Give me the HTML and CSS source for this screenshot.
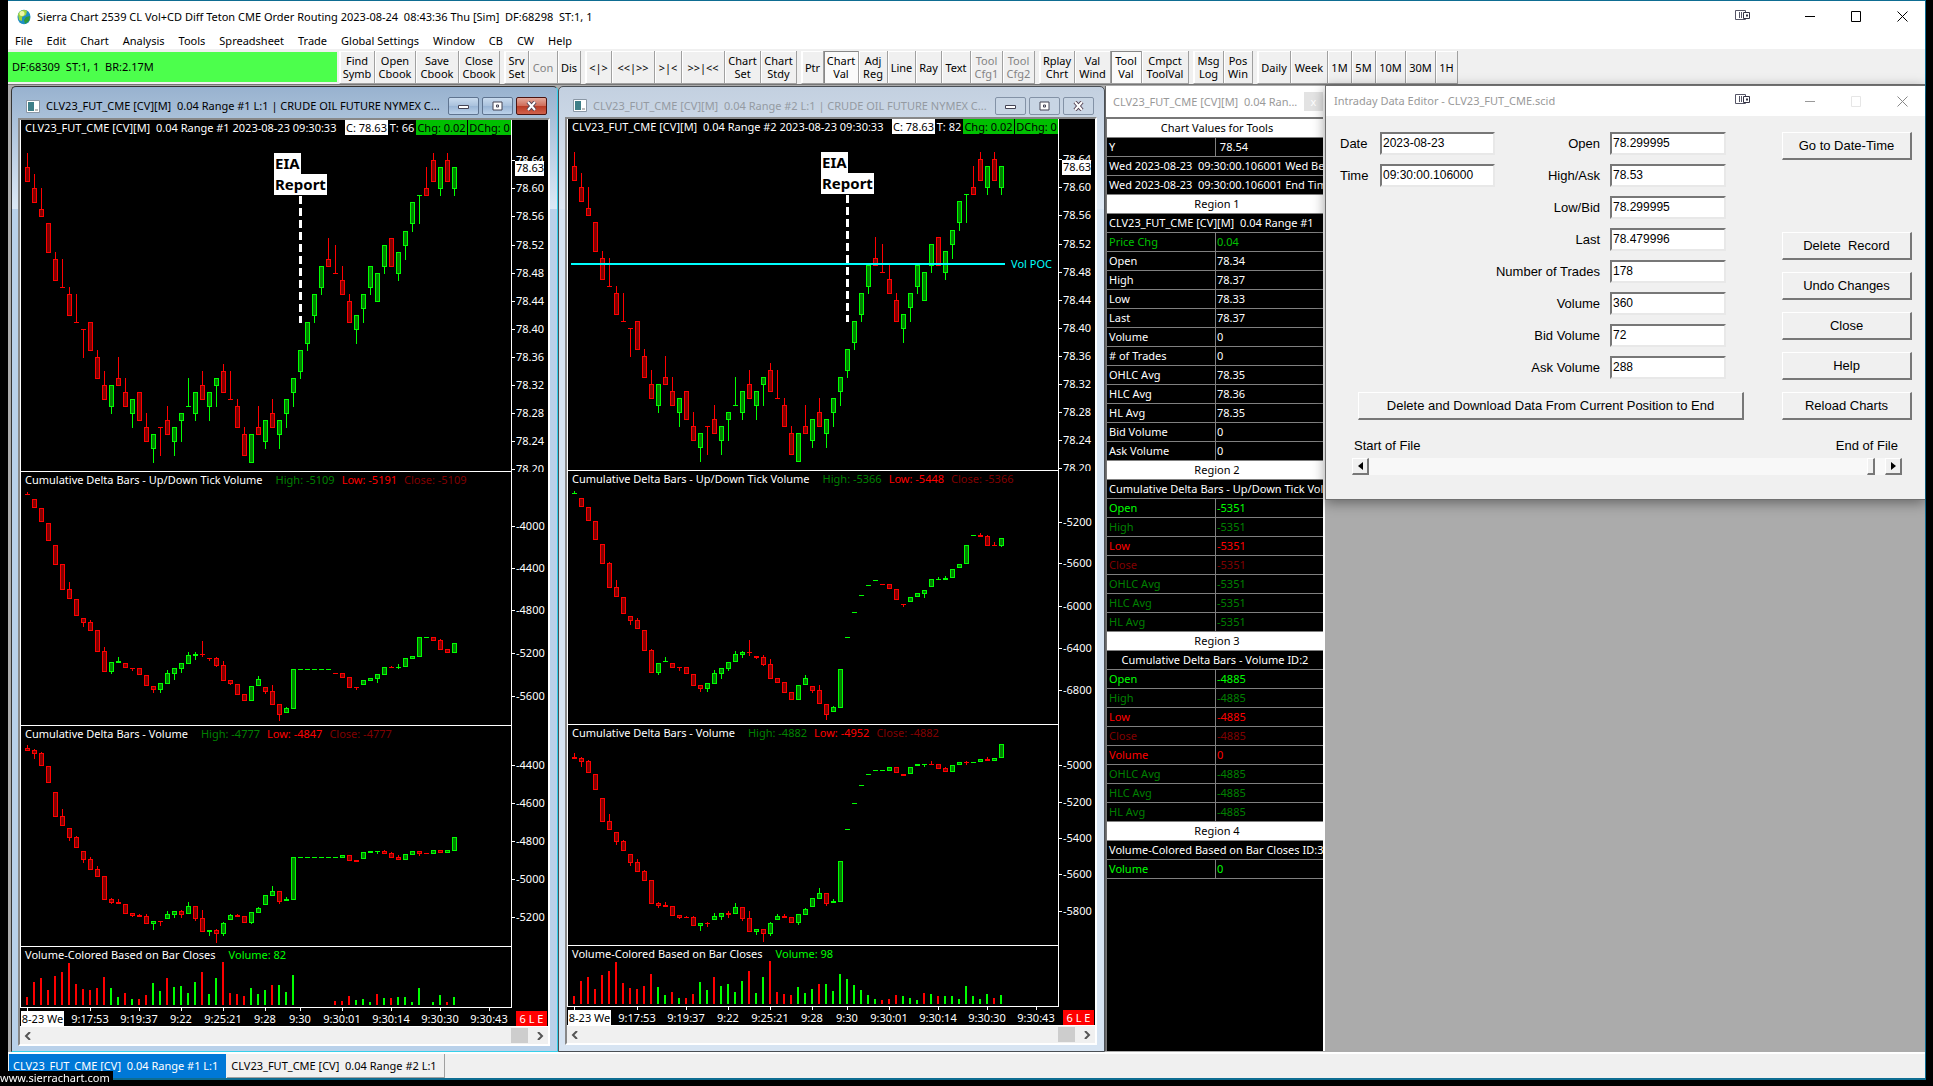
FILE: index.html
```html
<!DOCTYPE html>
<html lang="en">
<head>
<meta charset="utf-8">
<title>Sierra Chart</title>
<link rel="stylesheet" href="styles.css">
</head>
<body>
<div class="app">
  <header class="titlebar">
    <svg class="globe" width="14" height="16" viewBox="0 0 14 16"><ellipse cx="7" cy="8" rx="6.5" ry="7.3" fill="#1f8fc4"/><path d="M1 5C3 1 8 0 10 2L9 6 5 8 5 12 2 11Z" fill="#9fd33c"/><path d="M9 8 13 7 12 12 8 15 7 11Z" fill="#2f9a3c"/><ellipse cx="5" cy="4.500" rx="2.500" ry="2.500" fill="#eef7a8"/></svg>
    <h1 class="app-title">Sierra Chart 2539 CL Vol+CD Diff Teton CME Order Routing 2023-08-24&nbsp; 08:43:36 Thu [Sim]&nbsp; DF:68298&nbsp; ST:1, 1</h1>
    <div class="win-controls">
      <button class="wc" aria-label="Dock"><svg width="16" height="12" viewBox="0 0 16 12"><path d="M.5 1.500h10v9H.500zM4.500 3v6M6.500 3v6" fill="none" stroke="#556"/><path d="M8.500 3.500h6v6h-6z" fill="#fff" stroke="#334"/><path d="M11 5.500h2v2h-2z" fill="#334"/></svg></button>
      <button class="wc" aria-label="Minimize"><svg width="11" height="11"><path d="M0 5.500h10" stroke="#000"/></svg></button>
      <button class="wc" aria-label="Maximize"><svg width="11" height="11"><path d="M.5.5h9v10h-9z" fill="none" stroke="#000"/></svg></button>
      <button class="wc" aria-label="Close"><svg width="11" height="11"><path d="M.5.5l10 10M10.500.5l-10 10" stroke="#000"/></svg></button>
    </div>
  </header>
  <nav class="menu">
    <button>File</button><button>Edit</button><button>Chart</button><button>Analysis</button><button>Tools</button><button>Spreadsheet</button><button>Trade</button><button>Global Settings</button><button>Window</button><button>CB</button><button>CW</button><button>Help</button>
  </nav>
  <div class="toolbar">
    <div class="status">DF:68309&nbsp; ST:1, 1&nbsp; BR:2.17M</div>
    <div class="group"><button class="w35">Find<br>Symb</button><button class="w41">Open<br>Cbook</button><button class="w43">Save<br>Cbook</button><button class="w41">Close<br>Cbook</button></div>
    <div class="group"><button class="w24">Srv<br>Set</button><button class="w29" disabled>Con</button><button class="w23">Dis</button></div>
    <div class="group"><button class="w26">&lt;|&gt;</button><button class="w43">&lt;&lt;|&gt;&gt;</button><button class="w27">&gt;|&lt;</button><button class="w43">&gt;&gt;|&lt;&lt;</button><button class="w36">Chart<br>Set</button><button class="w36">Chart<br>Stdy</button></div>
    <div class="group"><button class="w22">Ptr</button><button class="w35 on">Chart<br>Val</button><button class="w29">Adj<br>Reg</button><button class="w28">Line</button><button class="w26">Ray</button><button class="w29">Text</button><button class="w32" disabled>Tool<br>Cfg1</button><button class="w32" disabled>Tool<br>Cfg2</button></div>
    <div class="group"><button class="w35">Rplay<br>Chrt</button><button class="w36">Val<br>Wind</button><button class="w31 on">Tool<br>Val</button><button class="w47">Cmpct<br>ToolVal</button></div>
    <div class="group"><button class="w30">Msg<br>Log</button><button class="w29">Pos<br>Win</button></div>
    <div class="group"><button class="w33">Daily</button><button class="w37">Week</button><button class="w24">1M</button><button class="w24">5M</button><button class="w30">10M</button><button class="w30">30M</button><button class="w22">1H</button></div>
  </div>

  <main class="mdi">
    <section class="child active" data-chart="1">
      <div class="caption">
        <svg class="doc" width="14" height="13"><path d="M.5.5h13v12H.500z" fill="#fff" stroke="#8a97a5"/><path d="M2 2h6v9H2z" fill="#3f7f88"/><path d="M9 9h3v2H9z" fill="#bbb"/></svg>
        <span class="caption-text">CLV23_FUT_CME [CV][M]&nbsp; 0.04 Range #1 L:1 | CRUDE OIL FUTURE NYMEX C...</span>
        <button aria-label="Minimize"><svg width="13" height="10"><path d="M1.500 4.500h10v3h-10z" fill="#fff" stroke="#445"/></svg></button>
        <button aria-label="Restore"><svg width="13" height="10"><path d="M2 1h9v8H2z" fill="#fff" stroke="#445"/><path d="M5.500 4h2v2h-2z" fill="none" stroke="#445"/></svg></button>
        <button class="close" aria-label="Close"><svg width="13" height="10"><path d="M3 1l7 8M10 1l-7 8" stroke="#545" stroke-width="4"/><path d="M3 1l7 8M10 1l-7 8" stroke="#fff" stroke-width="2"/></svg></button>
      </div>
      <div class="client">
        <div class="panel price"><p class="head"><span class="symbol">CLV23_FUT_CME [CV][M]&nbsp; 0.04 Range #1 2023-08-23 09:30:33</span><b class="last">C: 78.63</b><span class="trades">T: 66</span><b class="chg">Chg: 0.02</b><b class="chg">DChg: 0</b></p><svg class="plot"></svg><p class="note"><b>EIA</b><br><b>Report</b></p></div>
        <div class="panel ud"><p class="head">Cumulative Delta Bars - Up/Down Tick Volume<i class="hi">High: -5109</i><i class="lo">Low: -5191</i><i class="cl">Close: -5109</i></p><svg class="plot"></svg></div>
        <div class="panel cd"><p class="head">Cumulative Delta Bars - Volume<i class="hi">High: -4777</i><i class="lo">Low: -4847</i><i class="cl">Close: -4777</i></p><svg class="plot"></svg></div>
        <div class="panel vol"><p class="head">Volume-Colored Based on Bar Closes<i class="up">Volume: 82</i></p><svg class="plot"></svg></div>
        <div class="times"><svg class="plot"></svg><b class="date">8-23 We</b><b class="flag">6 L E</b></div>
        <div class="hscroll"><button aria-label="Scroll left"><svg width="8" height="8"><path d="M6 0L2 4l4 4" fill="none" stroke="#555" stroke-width="2"/></svg></button><span class="thumb"></span><button aria-label="Scroll right"><svg width="8" height="8"><path d="M2 0l4 4-4 4" fill="none" stroke="#555" stroke-width="2"/></svg></button></div>
      </div>
    </section>

    <section class="child" data-chart="2">
      <div class="caption">
        <svg class="doc" width="14" height="13"><path d="M.5.5h13v12H.500z" fill="#fff" stroke="#8a97a5"/><path d="M2 2h6v9H2z" fill="#3f7f88"/><path d="M9 9h3v2H9z" fill="#bbb"/></svg>
        <span class="caption-text">CLV23_FUT_CME [CV][M]&nbsp; 0.04 Range #2 L:1 | CRUDE OIL FUTURE NYMEX C...</span>
        <button aria-label="Minimize"><svg width="13" height="10"><path d="M1.500 4.500h10v3h-10z" fill="#fff" stroke="#445"/></svg></button>
        <button aria-label="Restore"><svg width="13" height="10"><path d="M2 1h9v8H2z" fill="#fff" stroke="#445"/><path d="M5.500 4h2v2h-2z" fill="none" stroke="#445"/></svg></button>
        <button aria-label="Close"><svg width="13" height="10"><path d="M3 1l7 8M10 1l-7 8" stroke="#545" stroke-width="4"/><path d="M3 1l7 8M10 1l-7 8" stroke="#fff" stroke-width="2"/></svg></button>
      </div>
      <div class="client">
        <div class="panel price"><p class="head"><span class="symbol">CLV23_FUT_CME [CV][M]&nbsp; 0.04 Range #2 2023-08-23 09:30:33</span><b class="last">C: 78.63</b><span class="trades">T: 82</span><b class="chg">Chg: 0.02</b><b class="chg">DChg: 0</b></p><svg class="plot"></svg><p class="note"><b>EIA</b><br><b>Report</b></p></div>
        <div class="panel ud"><p class="head">Cumulative Delta Bars - Up/Down Tick Volume<i class="hi">High: -5366</i><i class="lo">Low: -5448</i><i class="cl">Close: -5366</i></p><svg class="plot"></svg></div>
        <div class="panel cd"><p class="head">Cumulative Delta Bars - Volume<i class="hi">High: -4882</i><i class="lo">Low: -4952</i><i class="cl">Close: -4882</i></p><svg class="plot"></svg></div>
        <div class="panel vol"><p class="head">Volume-Colored Based on Bar Closes<i class="up">Volume: 98</i></p><svg class="plot"></svg></div>
        <div class="times"><svg class="plot"></svg><b class="date">8-23 We</b><b class="flag">6 L E</b></div>
        <div class="hscroll"><button aria-label="Scroll left"><svg width="8" height="8"><path d="M6 0L2 4l4 4" fill="none" stroke="#555" stroke-width="2"/></svg></button><span class="thumb"></span><button aria-label="Scroll right"><svg width="8" height="8"><path d="M2 0l4 4-4 4" fill="none" stroke="#555" stroke-width="2"/></svg></button></div>
      </div>
    </section>

    <section class="values">
      <div class="values-caption"><span>CLV23_FUT_CME [CV][M]&nbsp; 0.04 Ran...</span><button aria-label="Close">x</button></div>
      <div class="values-body">
      <table>
        <tr class="region"><th colspan="2">Chart Values for Tools</th></tr>
        <tr><td>Y</td><td>&nbsp;78.54</td></tr>
        <tr><td colspan="2">Wed 2023-08-23&nbsp; 09:30:00.106001 Wed Begin</td></tr>
        <tr><td colspan="2">Wed 2023-08-23&nbsp; 09:30:00.106001 End Time</td></tr>
        <tr class="region"><th colspan="2">Region 1</th></tr>
        <tr><td colspan="2">CLV23_FUT_CME [CV][M]&nbsp; 0.04 Range #1</td></tr>
        <tr class="chgrow"><td>Price Chg</td><td>0.04</td></tr>
        <tr><td>Open</td><td>78.34</td></tr>
        <tr><td>High</td><td>78.37</td></tr>
        <tr><td>Low</td><td>78.33</td></tr>
        <tr><td>Last</td><td>78.37</td></tr>
        <tr><td>Volume</td><td>0</td></tr>
        <tr><td># of Trades</td><td>0</td></tr>
        <tr><td>OHLC Avg</td><td>78.35</td></tr>
        <tr><td>HLC Avg</td><td>78.36</td></tr>
        <tr><td>HL Avg</td><td>78.35</td></tr>
        <tr><td>Bid Volume</td><td>0</td></tr>
        <tr><td>Ask Volume</td><td>0</td></tr>
        <tr class="region"><th colspan="2">Region 2</th></tr>
        <tr><td colspan="2">Cumulative Delta Bars - Up/Down Tick Volume</td></tr>
        <tr class="up"><td>Open</td><td>-5351</td></tr>
        <tr class="hi"><td>High</td><td>-5351</td></tr>
        <tr class="lo"><td>Low</td><td>-5351</td></tr>
        <tr class="cl"><td>Close</td><td>-5351</td></tr>
        <tr class="hi"><td>OHLC Avg</td><td>-5351</td></tr>
        <tr class="hi"><td>HLC Avg</td><td>-5351</td></tr>
        <tr class="hi"><td>HL Avg</td><td>-5351</td></tr>
        <tr class="region"><th colspan="2">Region 3</th></tr>
        <tr><td class="mid" colspan="2">Cumulative Delta Bars - Volume ID:2</td></tr>
        <tr class="up"><td>Open</td><td>-4885</td></tr>
        <tr class="hi"><td>High</td><td>-4885</td></tr>
        <tr class="lo"><td>Low</td><td>-4885</td></tr>
        <tr class="cl"><td>Close</td><td>-4885</td></tr>
        <tr class="lo"><td>Volume</td><td>0</td></tr>
        <tr class="hi"><td>OHLC Avg</td><td>-4885</td></tr>
        <tr class="hi"><td>HLC Avg</td><td>-4885</td></tr>
        <tr class="hi"><td>HL Avg</td><td>-4885</td></tr>
        <tr class="region"><th colspan="2">Region 4</th></tr>
        <tr><td colspan="2">Volume-Colored Based on Bar Closes ID:3</td></tr>
        <tr class="up"><td>Volume</td><td>0</td></tr>
      </table>
      </div>
    </section>

    <section class="dialog">
      <div class="dialog-caption"><h2>Intraday Data Editor - CLV23_FUT_CME.scid</h2>
        <div class="win-controls">
          <button class="wc" aria-label="Dock"><svg width="16" height="12" viewBox="0 0 16 12"><path d="M.5 1.500h10v9H.500zM4.500 3v6M6.500 3v6" fill="none" stroke="#556"/><path d="M8.500 3.500h6v6h-6z" fill="#fff" stroke="#334"/><path d="M11 5.500h2v2h-2z" fill="#334"/></svg></button>
          <button class="wc" aria-label="Minimize"><svg width="11" height="11"><path d="M0 5.500h10" stroke="#999"/></svg></button>
          <button class="wc" aria-label="Maximize" disabled><svg width="11" height="11"><path d="M.5.5h9v10h-9z" fill="none" stroke="#e6e6e6"/></svg></button>
          <button class="wc" aria-label="Close"><svg width="11" height="11"><path d="M.5.5l10 10M10.500.5l-10 10" stroke="#888"/></svg></button>
        </div>
      </div>
      <form class="editor">
        <div class="editor-main">
          <div class="fields-area">
            <div class="fields">
              <div class="stamp">
                <label for="f-date">Date</label><input id="f-date" value="2023-08-23">
                <label for="f-time">Time</label><input id="f-time" value="09:30:00.106000">
              </div>
              <div class="record">
                <label for="f-open">Open</label><input id="f-open" value="78.299995">
                <label for="f-high">High/Ask</label><input id="f-high" value="78.53">
                <label for="f-low">Low/Bid</label><input id="f-low" value="78.299995">
                <label for="f-last">Last</label><input id="f-last" value="78.479996">
                <label for="f-num">Number of Trades</label><input id="f-num" value="178">
                <label for="f-vol">Volume</label><input id="f-vol" value="360">
                <label for="f-bid">Bid Volume</label><input id="f-bid" value="72">
                <label for="f-ask">Ask Volume</label><input id="f-ask" value="288">
              </div>
            </div>
            <button type="button" class="btn wide">Delete and Download Data From Current Position to End</button>
          </div>
          <div class="actions">
            <button type="button" class="btn goto">Go to Date-Time</button>
            <button type="button" class="btn">Delete&nbsp; Record</button>
            <button type="button" class="btn">Undo Changes</button>
            <button type="button" class="btn">Close</button>
            <button type="button" class="btn">Help</button>
            <button type="button" class="btn">Reload Charts</button>
          </div>
        </div>
        <div class="ends"><label for="f-pos">Start of File</label><span>End of File</span></div>
        <div class="position">
          <button type="button" aria-label="Back"><svg width="5" height="8"><path d="M5 0v8L0 4z"/></svg></button>
          <input id="f-pos" type="range" min="0" max="100" value="98">
          <button type="button" aria-label="Forward"><svg width="5" height="8"><path d="M0 0v8l5-4z"/></svg></button>
        </div>
      </form>
    </section>
  </main>

  <footer class="tabs">
    <button class="tab current">CLV23_FUT_CME [CV]&nbsp; 0.04 Range #1 L:1</button><button class="tab">CLV23_FUT_CME [CV]&nbsp; 0.04 Range #2 L:1</button>
  </footer>
</div>
<a class="site" href="#">www.sierrachart.com</a>
<script src="charts.js"></script>
</body>
</html>
```
FILE: charts.js
```js
// Each bar: high, body top, body bottom, low, colour. Prices are in ticks below 78.65.
const price = `0,2,4,4,r 3,5,7,7,r 5,8,9,9,r 10,10,14,14,r 14,15,18,18,r 15,19,19,19,r 19,20,23,23,r 20,24,24,24,r 25,25,25,29,r 24,24,28,28,r
28,29,32,32,r 31,33,35,35,r 33,33,36,37,g 29,32,33,33,r 32,34,36,36,r 35,35,37,39,g 34,34,38,38,r 37,39,41,41,r 40,40,42,44,g 39,39,39,43,r
36,38,40,40,r 39,39,41,43,g 37,37,38,41,g 32,36,36,36,g 34,34,37,38,g 31,33,35,35,r 34,34,36,38,g 32,32,33,36,g 30,31,34,34,r 31,35,35,35,r
35,36,39,39,r 39,40,43,43,r 40,40,44,44,g 36,39,40,40,r 38,38,41,42,g 35,37,39,39,r 38,38,40,42,g 35,35,37,39,g 32,32,34,36,g 28,28,31,32,g
24,24,27,28,g 20,20,23,24,g 16,16,19,20,g 12,15,16,16,r 13,17,17,17,r 16,18,20,20,r 20,21,24,24,r 23,23,25,27,g 20,20,22,24,g 16,16,19,20,g
17,17,21,21,g 13,13,16,17,g 12,12,16,16,r 14,14,17,18,g 11,11,13,15,g 7,7,10,11,g 6,6,6,10,g 2,5,6,6,r 0,1,4,4,r 2,2,5,6,g 0,1,4,4,r 2,2,5,6,g`;

// Delta bars and volume bars are in thirds of a pixel.
const ud1 = `81,88,90,90,r 102,102,129,129,r 129,129,171,171,r 174,174,228,228,r 240,240,300,300,r 297,297,375,375,r 350,372,402,402,r 402,402,453,453,r 459,459,474,486,r 465,471,498,498,r
495,495,561,561,r 546,558,621,621,r 591,591,621,627,g 576,588,594,594,g 594,594,609,609,r 609,609,612,618,r 609,609,630,630,r 630,630,663,663,r 663,663,675,684,r 654,654,675,684,g
615,624,657,657,g 609,609,627,645,g 594,594,612,624,g 561,570,597,597,g 561,567,573,585,g 528,567,570,576,r 579,579,582,588,r 576,579,603,606,r 588,600,648,648,r 645,645,657,660,r
657,657,690,690,r 687,687,708,708,r 663,663,708,708,g 633,642,663,663,g 666,666,681,687,r 660,678,720,720,r 717,717,750,768,r 726,729,744,744,g 612,612,732,732,g 612,612,615,615,g
612,612,615,615,g 612,612,615,615,g 612,612,615,615,g 612,612,615,615,g 624,624,627,627,r 624,624,639,639,r 636,636,669,669,r 666,666,669,675,r 645,645,660,660,g 639,639,648,648,g
627,627,642,654,g 606,606,630,630,g 603,606,609,609,r 597,606,609,612,g 579,579,606,606,g 573,573,582,582,g 516,516,576,576,g 516,516,519,519,g 516,516,528,528,r 522,525,555,555,r 552,552,564,564,r 534,534,564,564,g`;
const cd1 = `75,84,93,93,r 87,90,102,117,r 96,99,138,138,r 138,138,189,189,r 216,216,291,291,r 267,288,318,318,r 324,324,354,363,r 348,351,384,384,r 393,393,420,429,r 411,417,450,450,r
438,447,471,471,r 468,468,540,540,r 534,537,549,552,r 537,546,552,552,r 552,552,582,582,r 579,579,588,591,r 582,585,591,591,r 582,588,612,612,r 603,603,612,630,g 603,603,606,618,r
573,582,597,597,g 573,573,585,594,g 570,573,585,594,r 546,558,582,582,g 558,558,597,603,r 570,594,636,636,r 630,630,636,648,g 627,630,642,669,r 606,609,642,648,g 582,585,600,600,g
582,585,591,591,r 588,588,609,609,r 576,576,609,612,g 561,564,579,579,g 525,525,555,555,g 498,513,528,528,g 513,513,546,552,r 531,537,543,543,g 411,411,540,540,g 411,411,414,414,g
411,411,414,414,g 411,411,414,414,g 411,411,414,414,g 411,411,414,414,g 411,411,414,414,g 405,405,414,414,g 405,405,423,423,r 420,420,426,426,r 396,396,417,417,g 393,393,399,399,g
393,393,396,402,g 390,393,402,402,r 396,399,414,414,r 405,411,420,420,r 402,402,420,420,g 393,393,405,405,g 393,393,402,408,r 399,399,402,402,r 390,390,402,402,g 390,390,399,399,r 390,390,399,399,g 351,351,393,393,g`;
const ud2 = `78,84,87,87,g 99,99,126,126,r 126,126,168,168,r 168,168,225,225,r 237,237,297,297,r 291,294,369,369,r 345,366,396,396,r 396,396,447,447,r 453,453,468,480,r 459,465,492,492,r
495,495,558,558,r 552,555,624,624,r 594,594,624,630,g 576,588,591,591,g 594,594,609,609,r 606,606,609,618,r 606,606,627,627,r 627,627,663,663,r 660,660,672,681,r 654,654,672,681,g
615,624,657,657,g 609,609,627,642,g 591,591,612,618,g 558,567,591,591,g 558,561,570,579,g 525,561,564,573,r 573,573,579,582,r 570,576,600,603,r 582,597,642,642,r 639,639,654,654,r
651,651,684,684,r 681,681,705,705,r 660,660,705,705,g 630,639,660,660,g 663,663,678,684,r 660,675,717,717,r 717,717,750,765,r 723,726,741,741,g 612,612,729,729,g 516,516,519,519,g
441,441,444,444,g 390,390,393,393,g 360,360,363,363,g 345,345,348,348,g 357,357,360,360,r 357,357,372,372,r 372,372,405,405,r 417,417,420,426,r 396,396,411,411,g 384,384,396,396,g
375,375,387,399,g 342,342,366,366,g 336,342,345,345,g 333,339,345,345,g 312,312,339,339,g 297,297,309,309,g 240,240,297,297,g 210,210,213,213,g 204,210,216,216,r 210,213,243,243,r 231,240,243,243,r 219,219,243,246,g`;
const cd2 = `99,111,117,117,r 111,114,126,141,r 120,123,159,159,r 162,162,210,210,r 234,234,306,306,r 282,303,330,330,r 336,336,366,375,r 360,363,393,393,r 402,402,429,438,r 417,426,456,456,r
450,453,483,483,r 480,480,552,552,r 546,549,558,564,r 546,555,561,561,r 558,558,588,588,r 585,585,594,597,r 588,591,594,594,r 588,591,618,618,r 609,609,618,633,g 606,609,612,621,r
579,588,600,600,g 579,579,591,600,g 573,579,585,594,r 549,561,582,582,g 561,561,597,603,r 573,594,636,636,r 627,627,636,645,g 627,627,642,666,r 606,609,642,648,g 582,588,600,600,g
582,588,594,594,r 591,591,609,609,r 582,582,609,615,g 564,567,585,585,g 534,534,561,561,g 504,519,537,537,g 519,519,552,558,r 537,543,549,549,g 423,423,546,546,g 327,327,330,330,g
249,249,252,252,g 195,195,198,198,g 162,162,165,165,g 150,150,153,153,g 150,150,153,153,g 141,141,153,153,g 141,141,159,159,r 162,162,168,168,r 141,141,162,162,g 132,132,138,138,g
132,132,135,141,g 123,132,135,135,r 132,132,147,147,r 141,144,156,156,r 135,135,156,156,g 126,126,135,135,g 123,126,129,135,r 126,126,129,129,g 117,117,126,126,g 111,117,123,123,r 114,114,123,123,g 72,72,114,114,g`;
const vol1 = `831r 786r 774r 810r 768r 756r 729r 792r 807r 810r 804r 771r 804g 831g 819r 837g 837r 825r 789g 813g 774r 801g 798g 819g 786g 756r 822g 774g 726r 819r 822r 828r 804g 822g 810g 795r 795g 816g 765g - - - - - 843r 843r 828r 840g 837g 846g 822r 834g 834r 831g 831g 846g 804g - 846g 825g 846r 831g`;
const vol2 = `828r 783r 771r 807r 765r 753r 726r 789r 804r 807r 798r 762r 801g 825g 816r 834g 834r 822r 786g 810g 771r 798g 792g 816g 783g 753r 819g 771g 723r 816r 822r 825r 801g 819g 807g 792r 792g 813g 762g 777g 795g 810g 825g 837g 840r 837r 825r 828g 834g 840g 819r 822g 828r 828g 828g 837g 798g 828g 837g 822g 834r 825g`;

const BRIGHT = { r: '#f00', g: '#0f0' }, DARK = { r: '#800000', g: '#008000' };
const STEP = 7, AXIS = 490;
const rect = (x, y, w, h, fill) => `<rect x="${x}" y="${y}" width="${w}" height="${h}" fill="${fill}"/>`;
const text = (x, y, s, cls) => `<text x="${x}" y="${y + 4}" class="${cls}">${s}</text>`;

function candles(data, toY, extra) {
  return data.split(/\s+/).map((bar, i) => {
    const p = bar.split(','), c = p[4];
    const [h, t, b, l] = p.slice(0, 4).map(v => toY(+v));
    const x = 4 + i * STEP, low = l + extra, bottom = Math.max(b + extra, t + 1);
    let s = rect(x + 2, h, 1, Math.max(low, bottom) - h, BRIGHT[c]) + rect(x, t, 5, bottom - t, BRIGHT[c]);
    if (bottom - t > 2) s += rect(x + 1, t + 1, 3, bottom - t - 2, DARK[c]);
    return s;
  }).join('');
}
const axis = labels => rect(AXIS, 0, 1, '100%', '#fff') +
  labels.map(([y, s]) => rect(AXIS + 1, y, 3, 1, '#fff') + text(AXIS + 5, y, s, 'lbl')).join('');

const charts = {
  1: { shift: 0, ud: ud1, cd: cd1, vol: vol1,
    udAxis: [[54, -4000], [96, -4400], [138, -4800], [181, -5200], [224, -5600]],
    cdAxis: [[39, -4400], [77, -4600], [115, -4800], [153, -5000], [191, -5200]] },
  2: { shift: 1, ud: ud2, cd: cd2, vol: vol2,
    udAxis: [[51, -5200], [92, -5600], [135, -6000], [177, -6400], [219, -6800]],
    cdAxis: [[40, -5000], [77, -5200], [113, -5400], [149, -5600], [186, -5800]] }
};
const timeLabels = [[0, ''], [9, '9:17:53'], [16, '9:19:37'], [22, '9:22'], [28, '9:25:21'], [34, '9:28'],
  [39, '9:30'], [45, '9:30:01'], [52, '9:30:14'], [59, '9:30:30'], [66, '9:30:43']];

document.querySelectorAll('.child').forEach(el => {
  const c = charts[el.dataset.chart];
  const draw = (sel, s) => { el.querySelector(sel + ' .plot').innerHTML = s; };
  const prices = [];
  for (let i = 0; i < 12; i++) prices.push([Math.round(40.300 + i * 28.080), (78.64 - i * 0.04).toFixed(2)]);
  let top = candles(price, v => Math.round(33.300 + v * 7.020), 1);
  for (let y = 76; y < 203; y += 12) top += rect(278, y, 3, Math.min(8, 203 - y), '#fff');
  if (c.shift) top += rect(3, 144, 434, 2, '#0ff') + text(443, 145, 'Vol POC', 'poc');
  draw('.price', top + axis(prices) + rect(494, 41, 29, 15, '#fff') + text(495, 48, '78.63', 'cur'));
  draw('.ud', candles(c.ud, v => Math.round(v / 3) - 7 + c.shift, 0) + axis(c.udAxis));
  draw('.cd', candles(c.cd, v => Math.round(v / 3) - 6 + c.shift, 0) + axis(c.cdAxis));
  draw('.vol', c.vol.split(' ').map((v, i) => {
    if (v === '-') return '';
    const y = Math.round(parseInt(v) / 3) - 227 + c.shift;
    return rect(5 + i * STEP, y, 2, 58 - y, BRIGHT[v.slice(-1)]);
  }).join('') + axis([]));
  draw('.times', timeLabels.map(([i, s]) => rect(6 + i * STEP, 0, 1, 3, '#fff') + text(6 + i * STEP, 11, s, 'time')).join(''));
});
```
FILE: styles.css
```css
* { box-sizing: border-box; }
body { margin: 0; height: 100vh; background: #000; color: #000; font: 11px/16px "Noto Sans", "Open Sans", sans-serif; overflow: hidden; display: flex; flex-direction: column; }
button { font: inherit; color: inherit; border: 0; padding: 0; margin: 0; background: none; }
p, h1, h2 { margin: 0; font: inherit; }
svg { display: block; }
.app { flex: 1; min-height: 0; margin: 0 7px 6px 8px; border: solid #0e6d92; border-width: 1px 1px 2px 0; display: flex; flex-direction: column; background: #fff; }

.titlebar { height: 31px; display: flex; align-items: center; padding-left: 9px; }
.globe { flex: none; margin-right: 6px; }
.app-title { flex: 1; white-space: nowrap; }
.win-controls { display: flex; }
.wc { width: 46px; height: 30px; display: flex; align-items: center; justify-content: center; }
.wc:first-child { width: 48px; margin-right: 20px; padding-bottom: 4px; }
.menu { height: 17px; display: flex; gap: 14px; padding-left: 7px; }

.toolbar { height: 36px; background: #f0f0f0; display: flex; padding-top: 2px; border-bottom: 1px solid #777; }
.status { width: 329px; height: 30px; line-height: 30px; background: #4cff4c; padding-left: 4px; margin: 1px 3px 0 0; }
.group { display: flex; margin-right: 5px; border-left: 1px solid #fff; margin-left: -1px; border-bottom: 1px solid #a0a0a0; }
.group button { line-height: 13px; border-right: 1px solid #a0a0a0; box-shadow: inset 1px 1px #fff; white-space: nowrap; display: flex; align-items: center; justify-content: center; text-align: center; }
.group button:disabled { color: #838383; }
.group .on { background: #fafafa; box-shadow: inset 1px 1px #888; }
.w22 { width: 22px; } .w23 { width: 23px; } .w24 { width: 24px; } .w26 { width: 26px; } .w27 { width: 27px; }
.w28 { width: 28px; } .w29 { width: 29px; } .w30 { width: 30px; } .w31 { width: 31px; } .w32 { width: 32px; }
.w33 { width: 33px; } .w35 { width: 35px; } .w36 { width: 36px; } .w37 { width: 37px; } .w41 { width: 41px; }
.w43 { width: 43px; } .w47 { width: 47px; }

.mdi { flex: 1; min-height: 0; display: flex; padding: 1px 0 0 3px; background: #ababab; }
.child { flex: none; display: flex; flex-direction: column; width: 547px; padding: 0 7px 6px 6px; border: 1px solid #4a4f55; border-radius: 5px 5px 0 0; background: linear-gradient(#c3d0e0, #dfe9f4 122px, #d7e4f2 122px); }
.child.active { padding-bottom: 5px; border-color: #333 #36d0ea #36d0ea #333; background: linear-gradient(#98b2cf, #dce9f6 122px, #b9d1ea 122px); }
.caption { flex: none; height: 30px; padding: 7px 3px 0 8px; display: flex; align-items: center; color: #949aa2; gap: 3px; }
.active .caption { height: 31px; color: #000; }
.doc { margin-right: 3px; flex: none; }
.caption-text { flex: 1; min-width: 0; white-space: nowrap; overflow: hidden; }
.caption button { width: 31px; height: 18px; border: 1px solid #8392a6; border-radius: 2px; display: flex; align-items: center; justify-content: center; background: #c8d5e4; }
.active .caption button { border-color: #5f7490; background: linear-gradient(#c9dbee, #a9c1dc 50%, #98b4d4 50%, #bcd2ea); }
.active .caption .close { border-color: #4b1410; background: linear-gradient(#e3a99c, #cf6b58 50%, #b93a24 50%, #d0624c); }
.client { flex: 1; min-height: 0; display: flex; flex-direction: column; border: 2px solid; border-color: #888 #fff #fff #888; background: #000; }
.panel { position: relative; min-height: 0; border-left: 1px solid #fff; color: #fff; overflow: hidden; }
.panel::after { content: ""; position: absolute; left: 0; bottom: 0; width: 491px; height: 1px; background: #fff; }
.price { flex: 352 1 0; } .ud { flex: 254 1 0; } .cd { flex: 221 1 0; } .vol { flex: 61 1 0; }
.plot { position: absolute; left: 0; top: 0; width: 100%; height: 100%; }
.head { position: relative; width: 490px; line-height: 15px; padding-left: 4px; display: flex; white-space: nowrap; overflow: hidden; }
.head b, .head i { font-weight: 400; font-style: normal; }
.head i { margin-left: 7px; }
.head i:first-child { margin-left: 13px; }
.symbol { flex: none; width: 320px; }
.last, .chg, .trades { flex: none; margin-right: 1px; }
.last { width: 43px; background: #fff; color: #000; text-align: center; }
.trades { width: 26px; text-align: center; }
.chg { background: #00c000; color: #000; width: 51px; text-align: center; }
.chg:last-child { width: 43px; margin-right: 0; }
.up { color: #0f0; } .hi { color: #008000; } .lo { color: #f00; } .cl { color: #800000; }
.note { position: absolute; left: 253px; top: 33px; font-size: 15px; line-height: 21px; color: #000; }
.note b { display: inline-block; background: #fff; padding: 0 1px; vertical-align: top; }
.lbl { fill: #fff; } .cur { fill: #000; } .poc { fill: #0ff; }
.time { fill: #fff; text-anchor: middle; }
.times { position: relative; height: 18px; flex: none; }
.times .plot { left: 1px; }
.date, .flag { position: absolute; top: 3px; height: 15px; line-height: 15px; font-weight: 400; }
.date { left: 1px; width: 43px; background: #fff; text-align: center; white-space: nowrap; }
.flag { right: 1px; width: 31px; background: #f00; color: #fff; text-align: center; }
.hscroll { height: 18px; flex: none; background: #f0f0f0; display: flex; align-items: center; padding: 0 4px; border-top: 1px solid #fff; }
.hscroll button { width: 8px; }
.thumb { width: 17px; height: 15px; background: #cdcdcd; margin: 0 8px 0 auto; }

.values { flex: none; width: 220px; display: flex; flex-direction: column; background: #fff; border-left: 1px solid #666; padding-right: 2px; margin-bottom: 1px; }
.values-caption { height: 31px; display: flex; align-items: center; justify-content: space-between; padding-left: 7px; color: #999; white-space: nowrap; }
.values-caption button { width: 19px; height: 19px; background: #e3e3e3; color: #fff; line-height: 19px; flex: none; }
.values-body { flex: 1; min-height: 0; background: #000; border: solid #777; border-width: 2px 0 0 1px; overflow: hidden; }
table { width: 100%; table-layout: fixed; border-collapse: separate; border-spacing: 0; color: #fff; }
td, th { height: 19px; line-height: 18px; padding: 0 2px; border-bottom: 1px solid #808080; font-weight: 400; white-space: nowrap; overflow: hidden; text-align: left; }
td + td { border-left: 1px solid #808080; padding-left: 1px; }
.region th { background: #fff; color: #000; text-align: center; padding-left: 6px; }
td.mid { text-align: center; }
.chgrow { color: #00c000; }
tr.up { color: #0f0; } tr.hi { color: #008000; } tr.lo { color: #f00; } tr.cl { color: #800000; }

.dialog { flex: 1; min-width: 0; align-self: flex-start; margin-top: -1px; background: #f0f0f0; border: 1px solid #707070; border-right: 0; box-shadow: 0 3px 12px rgba(0, 0, 0, .4); position: relative; }
.dialog-caption { height: 30px; display: flex; align-items: center; justify-content: space-between; background: #fff; color: #999; padding-left: 8px; }
.editor { padding: 16px 13px 24px 14px; font: 13px/16px "Liberation Sans", Arial, sans-serif; }
.editor-main { display: flex; gap: 38px; }
.fields-area { flex: 1; }
.fields { display: flex; justify-content: space-between; align-items: flex-start; padding-right: 18px; margin-bottom: 13px; }
.stamp, .record { display: grid; row-gap: 9px; align-items: center; }
.stamp { grid-template-columns: 40px 115px; }
.record { grid-template-columns: auto 116px; column-gap: 10px; text-align: right; }
.stamp input, .record input { width: 100%; height: 23px; border: 2px solid; border-color: #777 #e8e8e8 #e8e8e8 #777; background: #fff; font: inherit; font-size: 12px; padding: 0 1px 1px; }
.btn { height: 28px; width: 100%; border: solid; border-width: 1px 2px 2px 1px; border-color: #fff #777 #777 #fff; background: #f0f0f0; }
.wide { display: block; width: auto; margin-left: 18px; width: calc(100% - 18px); }
.actions { width: 130px; display: flex; flex-direction: column; gap: 12px; }
.goto { margin-bottom: 60px; }
.ends { display: flex; justify-content: space-between; padding: 0 14px; margin-top: 18px; }
.position { display: flex; height: 17px; margin: 4px 10px 0 12px; background: #f8f8f8; }
.position button { width: 17px; border: solid; border-width: 1px 2px 2px 1px; border-color: #fff #777 #777 #fff; background: #f0f0f0; display: flex; align-items: center; justify-content: center; }
.position input { flex: 1; min-width: 0; height: 17px; margin: 0; appearance: none; background: none; }
.position input::-webkit-slider-thumb { appearance: none; width: 8px; height: 17px; background: #f0f0f0; border: solid; border-width: 1px 2px 2px 1px; border-color: #fff #777 #777 #fff; }

.tabs { height: 26px; flex: none; display: flex; gap: 1px; background: #f0f0f0; border-top: 2px solid #fff; padding-left: 1px; }
.tab { padding: 0 7px 0 4px; border: solid; border-width: 0 1px 1px 0; border-color: #a0a0a0; }
.current { background: #0078d7; color: #fff; border-color: #0078d7; }
.site { position: fixed; left: 0; bottom: 0; height: 15px; line-height: 14px; width: 113px; background: #000; color: #fff; text-decoration: none; }
```
